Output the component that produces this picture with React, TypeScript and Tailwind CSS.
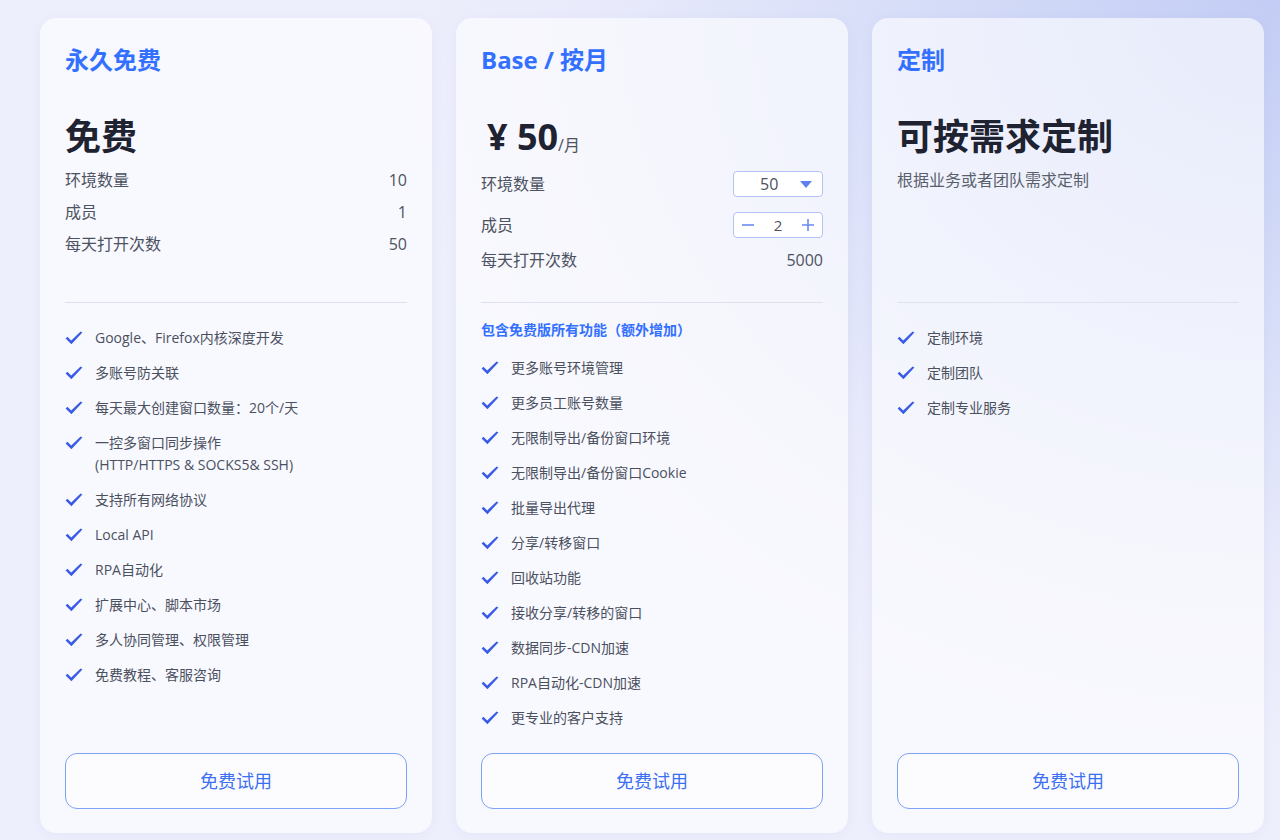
import React from "react";

type Feature = string | string[];

const CheckIcon = () => (
    <svg className="w-[18px] h-[14px] shrink-0 mt-[4px]" viewBox="0 0 18 14" fill="#3a5be6">
        <path d="M0.6 7.4 L2.4 5.8 L6.2 9.4 L15.6 0.6 L17.4 1.6 L6.4 13.2 Z" />
    </svg>
);

const FeatureList: React.FC<{ items: Feature[] }> = ({ items }) => (
    <ul className="flex flex-col gap-[13px]">
        {items.map((item, i) => (
            <li key={i} className="flex items-start gap-3 text-[14px] leading-[22px] text-[#4b505e]">
                <CheckIcon />
                <div>
                    {Array.isArray(item)
                        ? item.map((line) => <div key={line}>{line}</div>)
                        : item}
                </div>
            </li>
        ))}
    </ul>
);

const Row: React.FC<{ label: string; children: React.ReactNode; className?: string }> = ({
    label,
    children,
    className,
}) => (
    <div className={"flex items-center justify-between text-[16px] text-[#4d5261] " + (className ?? "")}>
        <span>{label}</span>
        <span>{children}</span>
    </div>
);

const TrialButton = () => (
    <button className="mt-auto h-[56px] w-[342px] rounded-[12px] border border-[#7ca3f6] bg-white/50 text-[18px] text-[#3d6ff2]">
        免费试用
    </button>
);

const Card: React.FC<{ children: React.ReactNode }> = ({ children }) => (
    <div className="flex h-[815px] w-[392px] shrink-0 flex-col rounded-[16px] bg-white/60 px-[25px] pt-[24px] pb-[24px] shadow-[0_2px_12px_rgba(120,130,200,0.08)]">
        {children}
    </div>
);

const freeFeatures: Feature[] = [
    "Google、Firefox内核深度开发",
    "多账号防关联",
    "每天最大创建窗口数量：20个/天",
    ["一控多窗口同步操作", "(HTTP/HTTPS & SOCKS5& SSH)"],
    "支持所有网络协议",
    "Local API",
    "RPA自动化",
    "扩展中心、脚本市场",
    "多人协同管理、权限管理",
    "免费教程、客服咨询",
];

const baseFeatures: Feature[] = [
    "更多账号环境管理",
    "更多员工账号数量",
    "无限制导出/备份窗口环境",
    "无限制导出/备份窗口Cookie",
    "批量导出代理",
    "分享/转移窗口",
    "回收站功能",
    "接收分享/转移的窗口",
    "数据同步-CDN加速",
    "RPA自动化-CDN加速",
    "更专业的客户支持",
];

const customFeatures: Feature[] = ["定制环境", "定制团队", "定制专业服务"];

export default function App() {
    return (
        <div
            className="flex h-[840px] w-[1280px] gap-6 overflow-hidden bg-[#eeeffc] bg-[radial-gradient(ellipse_70%_90%_at_100%_0%,#c3cdf5_0%,#d6ddf8_40%,#e8eafb_75%,#eeeffc_100%)] pl-[40px] pt-[18px]"
            style={{ fontFamily: '"Open Sans", "Noto Sans CJK SC", sans-serif' }}
        >
            {/* Free */}
            <Card>
                <div className="h-[260px]">
                    <h2 className="text-[24px] font-bold leading-[36px] text-[#3370ff]">永久免费</h2>
                    <div className="mt-[37px] text-[36px] font-bold leading-[44px] text-[#1e2231]">免费</div>
                    <div className="mt-[5px] flex flex-col [&>div]:h-[32px]">
                        <Row label="环境数量">10</Row>
                        <Row label="成员">1</Row>
                        <Row label="每天打开次数">50</Row>
                    </div>
                </div>
                <div className="h-px bg-[#dfe2ee]" />
                <div className="pt-[24px]">
                    <FeatureList items={freeFeatures} />
                </div>
                <TrialButton />
            </Card>

            {/* Base */}
            <Card>
                <div className="h-[260px]">
                    <h2 className="text-[24px] font-bold leading-[36px] text-[#3370ff]">Base / 按月</h2>
                    <div className="mt-[37px] flex h-[44px] items-end pl-[6px] text-[#1e2231]">
                        <span className="text-[36px] font-bold leading-[44px]">¥ 50</span>
                        <span className="mb-[2px] text-[16px] text-[#4d5261]">/月</span>
                    </div>
                    <div className="mt-[12px] flex flex-col">
                        <Row label="环境数量" className="h-[26px]">
                            <div className="flex h-[26px] w-[90px] items-center justify-between rounded-[4px] border border-[#b3c2f7] bg-white pl-[26px] pr-[10px] text-[#4d5261]">
                                <span>50</span>
                                <svg className="h-[7px] w-[12px]" viewBox="0 0 12 7" fill="#5f80ef">
                                    <path d="M0 0 H12 L6 7 Z" />
                                </svg>
                            </div>
                        </Row>
                        <Row label="成员" className="mt-[15px] h-[26px]">
                            <div className="flex h-[26px] w-[90px] items-center justify-between rounded-[4px] border border-[#b3c2f7] bg-white px-[7px] text-[15px] text-[#4d5261]">
                                <svg className="h-[14px] w-[14px]" viewBox="0 0 14 14" stroke="#6a8bf0" strokeWidth="1.6">
                                    <path d="M1 7 H13" />
                                </svg>
                                <span>2</span>
                                <svg className="h-[14px] w-[14px]" viewBox="0 0 14 14" stroke="#6a8bf0" strokeWidth="1.6">
                                    <path d="M1 7 H13 M7 1 V13" />
                                </svg>
                            </div>
                        </Row>
                        <Row label="每天打开次数" className="mt-[10px] h-[24px]">5000</Row>
                    </div>
                </div>
                <div className="h-px bg-[#dfe2ee]" />
                <div className="pt-[16px]">
                    <div className="mb-[16px] text-[14px] font-bold leading-[22px] text-[#3370ff]">
                        包含免费版所有功能（额外增加）
                    </div>
                    <FeatureList items={baseFeatures} />
                </div>
                <TrialButton />
            </Card>

            {/* Custom */}
            <Card>
                <div className="h-[260px]">
                    <h2 className="text-[24px] font-bold leading-[36px] text-[#3370ff]">定制</h2>
                    <div className="mt-[37px] text-[36px] font-bold leading-[44px] text-[#1e2231]">可按需求定制</div>
                    <div className="mt-[5px] text-[16px] leading-[32px] text-[#5a5f6c]">根据业务或者团队需求定制</div>
                </div>
                <div className="h-px bg-[#dfe2ee]" />
                <div className="pt-[24px]">
                    <FeatureList items={customFeatures} />
                </div>
                <TrialButton />
            </Card>
        </div>
    );
}
